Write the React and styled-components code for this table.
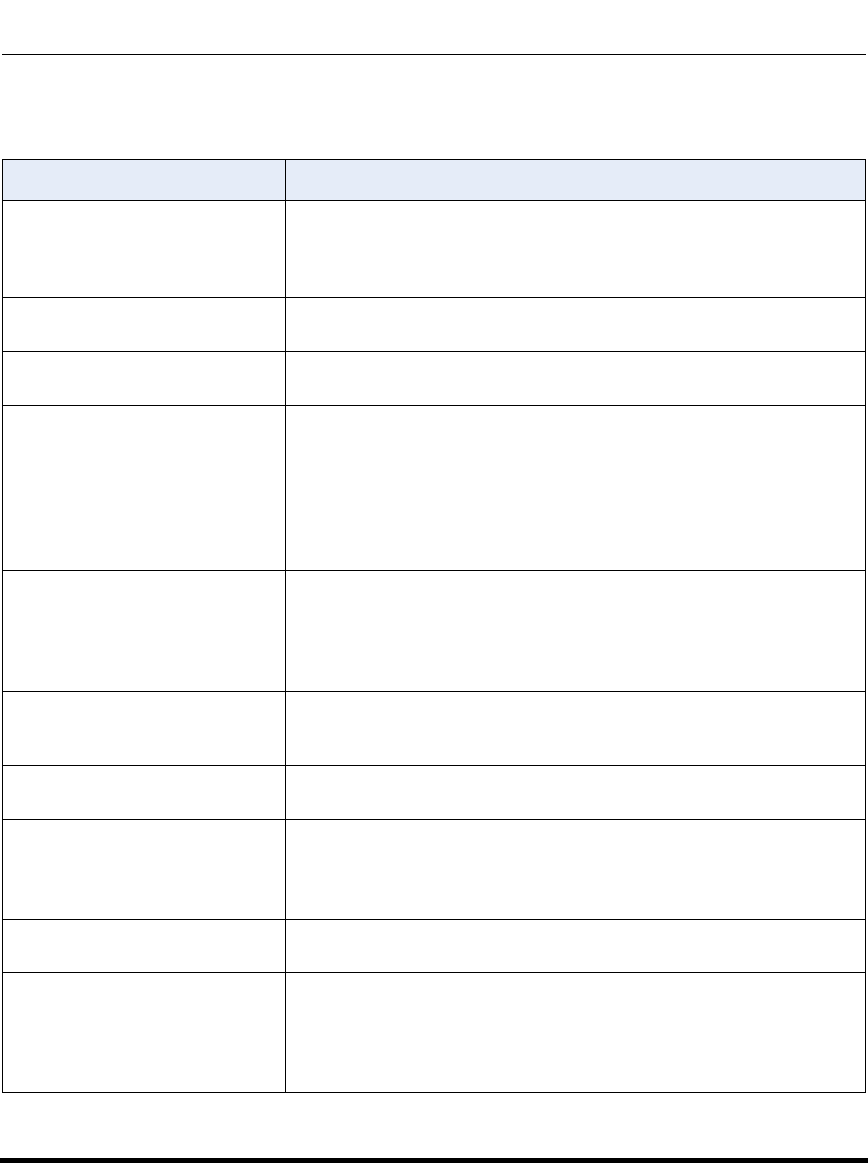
import styled, { createGlobalStyle } from "styled-components";

const GlobalStyle = createGlobalStyle`
  html, body {
    margin: 0;
    padding: 0;
    background: #ffffff;
  }
  body {
    font-family: "Liberation Sans", Arial, sans-serif;
  }
`;

const rows = [97, 54, 54, 165, 121, 74, 54, 100, 53, 120];

const Page = styled.div`
  display: flex;
  flex-direction: column;
  min-height: 1163px;
  width: 868px;
`;

const HeaderRule = styled.div`
  margin: 54px 0 0 2px;
  width: 864px;
  height: 1px;
  background: #000000;
`;

const Table = styled.div`
  display: grid;
  grid-template-columns: 283px 580px;
  margin: 104px 0 0 2px;
  width: 864px;
  border-top: 1px solid #000000;
  border-left: 1px solid #000000;
  box-sizing: border-box;
`;

const Cell = styled.div`
  box-sizing: border-box;
  height: ${(p) => p.$height}px;
  border-right: 1px solid #000000;
  border-bottom: 1px solid #000000;
  background: ${(p) => (p.$head ? "#e5ecf8" : "#ffffff")};
`;

const FooterBar = styled.div`
  margin-top: auto;
  height: 5px;
  width: 100%;
  background: #000000;
`;

const App = () => {
  return (
    <>
      <GlobalStyle />
      <Page>
        <HeaderRule />
        <Table>
          <Cell $head $height={41} />
          <Cell $head $height={41} />
          {rows.map((h, i) => [
            <Cell key={`a${i}`} $height={h} />,
            <Cell key={`b${i}`} $height={h} />,
          ])}
        </Table>
        <FooterBar />
      </Page>
    </>
  );
};

export default App;
